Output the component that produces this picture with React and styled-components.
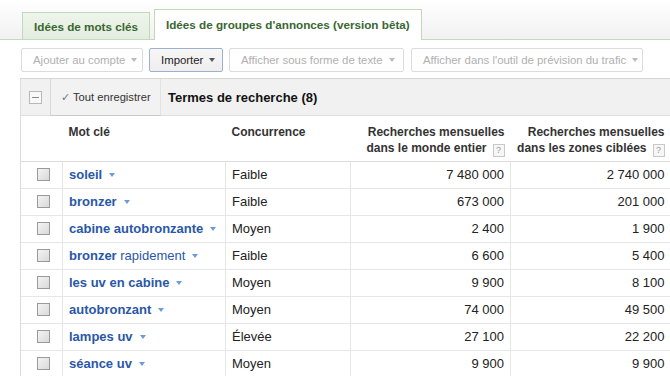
import styled, { createGlobalStyle } from 'styled-components';

const GlobalStyle = createGlobalStyle`
  body {
    margin: 0;
    background: #fff;
    font-family: 'Liberation Sans', Arial, sans-serif;
    color: #222;
    overflow: hidden;
  }
`;

const rows = [
  { kw: 'soleil', comp: 'Faible', global: '7 480 000', local: '2 740 000' },
  { kw: 'bronzer', comp: 'Faible', global: '673 000', local: '201 000' },
  { kw: 'cabine autobronzante', comp: 'Moyen', global: '2 400', local: '1 900' },
  { kw: 'bronzer', extra: 'rapidement', comp: 'Faible', global: '6 600', local: '5 400' },
  { kw: 'les uv en cabine', comp: 'Moyen', global: '9 900', local: '8 100' },
  { kw: 'autobronzant', comp: 'Moyen', global: '74 000', local: '49 500' },
  { kw: 'lampes uv', comp: 'Élevée', global: '27 100', local: '22 200' },
  { kw: 'séance uv', comp: 'Moyen', global: '9 900', local: '9 900' },
];

const Page = styled.div`
  width: 670px;
  height: 376px;
  overflow: hidden;
`;

const TabBar = styled.div`
  height: 39px;
  display: flex;
  align-items: flex-end;
  gap: 4px;
  padding-left: 22px;
  background: linear-gradient(to bottom, #ffffff 0%, #f0f1f0 100%);
  border-bottom: 1px solid #c4dabd;
`;

const Tab = styled.div`
  height: ${(p) => (p.$active ? '28px' : '26px')};
  margin-bottom: ${(p) => (p.$active ? '-1px' : '0')};
  display: flex;
  align-items: center;
  padding: 0 11px;
  border: 1px solid #c2d8bb;
  border-bottom: none;
  background: ${(p) =>
    p.$active ? '#fff' : 'linear-gradient(to bottom, #eef5eb, #e3eddf)'};
  color: #3a6632;
  font-size: 11.7px;
  font-weight: bold;
  white-space: nowrap;
  padding-bottom: ${(p) => (p.$active ? '2px' : '0')};
`;

const Toolbar = styled.div`
  display: flex;
  padding: 8px 0 0 21px;
  height: 24px;
`;

const Button = styled.div`
  flex-shrink: 0;
  box-sizing: border-box;
  width: ${(p) => p.$w}px;
  margin-right: ${(p) => p.$gap || 0}px;
  white-space: nowrap;
  height: 24px;
  display: flex;
  align-items: center;
  gap: 6px;
  padding: 0 0 0 11px;
  border: 1px solid ${(p) => (p.$enabled ? '#9fb0cc' : '#dcdcdc')};
  border-radius: 2px;
  background: ${(p) =>
    p.$enabled ? 'linear-gradient(to bottom, #f7f7f7, #eeeeee)' : '#fff'};
  color: ${(p) => (p.$enabled ? '#222' : '#b0b0b0')};
  font-size: 11.4px;
`;

const Caret = styled.span`
  width: 0;
  height: 0;
  border-left: 3.5px solid transparent;
  border-right: 3.5px solid transparent;
  border-top: 4px solid ${(p) => p.$color || '#999'};
  display: inline-block;
`;

const Panel = styled.div`
  margin: 6px 0 0 20px;
  border-left: 1px solid #dcdcdc;
  border-top: 1px solid #d6d6d6;
  width: 660px;
`;

const Strip = styled.div`
  height: 36px;
  display: flex;
  align-items: stretch;
  background: #f1f1f1;
  border-bottom: 1px solid #dedede;
`;

const CollapseCell = styled.div`
  width: 29px;
  display: flex;
  align-items: center;
  padding-left: 8px;
  box-sizing: border-box;
`;

const CollapseBox = styled.span`
  width: 11px;
  height: 11px;
  border: 1px solid #b8b8b8;
  background: #f8f8f8;
  position: relative;
  &::after {
    content: '';
    position: absolute;
    left: 2px;
    right: 2px;
    top: 5px;
    height: 1px;
    background: #8a8a8a;
  }
`;

const SaveButton = styled.div`
  width: 111px;
  box-sizing: border-box;
  display: flex;
  align-items: center;
  gap: 3px;
  padding-left: 10px;
  border-left: 1px solid #d8d8d8;
  border-right: 1px solid #e2e2e2;
  border-bottom: 1px solid #c8c8c8;
  margin-bottom: -1px;
  background: #f2f2f2;
  font-size: 11.2px;
  color: #333;
  white-space: nowrap;
`;

const Tick = styled.span`
  color: #777;
`;

const StripTitle = styled.div`
  display: flex;
  align-items: center;
  padding-left: 7px;
  font-size: 13px;
  font-weight: bold;
  color: #111;
`;

const Table = styled.table`
  border-collapse: collapse;
  table-layout: fixed;
  width: 649px;
`;

const Th = styled.th`
  height: 45px;
  box-sizing: border-box;
  vertical-align: top;
  padding: 8px 6px 0;
  text-align: ${(p) => (p.$right ? 'right' : 'left')};
  font-size: 12px;
  line-height: 16px;
  font-weight: bold;
  color: #333;
  border-bottom: 1px solid #dcdcdc;
  white-space: nowrap;
`;

const Td = styled.td`
  height: 26px;
  padding: 0 6px;
  font-size: 13px;
  color: #222;
  text-align: ${(p) => (p.$right ? 'right' : 'left')};
  border-bottom: 1px solid #e6e6e6;
  border-left: 1px solid ${(p) => (p.$first ? 'transparent' : '#e6e6e6')};
  white-space: nowrap;
`;

const CheckCell = styled(Td)`
  padding: 0 0 0 15px;
`;

const Check = styled.span`
  display: block;
  width: 11px;
  height: 11px;
  border: 1px solid #9a9a9a;
  background: linear-gradient(135deg, #f4f4f4, #d9d9d9);
`;

const Keyword = styled.span`
  color: #2a57a8;
  font-weight: bold;
  display: inline-flex;
  align-items: center;
  gap: 7px;
`;

const Extra = styled.span`
  font-weight: normal;
`;

const Help = styled.span`
  display: inline-block;
  width: 10px;
  height: 11px;
  margin-left: 6px;
  border: 1px solid #c8c8c8;
  background: #f6f6f6;
  color: #999;
  font-size: 9px;
  line-height: 11px;
  text-align: center;
  font-weight: normal;
  vertical-align: -1px;
`;

export default function App() {
  return (
    <Page>
      <GlobalStyle />
      <TabBar>
        <Tab>Idées de mots clés</Tab>
        <Tab $active>Idées de groupes d'annonces (version bêta)</Tab>
      </TabBar>
      <Toolbar>
        <Button $w={122} $gap={6}>
          Ajouter au compte <Caret $color="#bbb" />
        </Button>
        <Button $w={74} $gap={6} $enabled>
          Importer <Caret $color="#555" />
        </Button>
        <Button $w={175} $gap={7}>
          Afficher sous forme de texte <Caret $color="#bbb" />
        </Button>
        <Button $w={232}>
          Afficher dans l'outil de prévision du trafic <Caret $color="#bbb" />
        </Button>
      </Toolbar>
      <Panel>
        <Strip>
          <CollapseCell>
            <CollapseBox />
          </CollapseCell>
          <SaveButton>
            <Tick>✓</Tick> Tout enregistrer
          </SaveButton>
          <StripTitle>Termes de recherche (8)</StripTitle>
        </Strip>
        <Table>
          <colgroup>
            <col style={{ width: 41 }} />
            <col style={{ width: 163 }} />
            <col style={{ width: 125 }} />
            <col style={{ width: 160 }} />
            <col style={{ width: 160 }} />
          </colgroup>
          <thead>
            <tr>
              <Th />
              <Th>Mot clé</Th>
              <Th>Concurrence</Th>
              <Th $right>
                Recherches mensuelles
                <br />
                dans le monde entier<Help>?</Help>
              </Th>
              <Th $right>
                Recherches mensuelles
                <br />
                dans les zones ciblées<Help>?</Help>
              </Th>
            </tr>
          </thead>
          <tbody>
            {rows.map((r) => (
              <tr key={r.kw + (r.extra || '')}>
                <CheckCell $first>
                  <Check />
                </CheckCell>
                <Td>
                  <Keyword>
                    <span>
                      {r.kw}
                      {r.extra && <Extra>{' ' + r.extra}</Extra>}
                    </span>
                    <Caret $color="#6d9ad8" />
                  </Keyword>
                </Td>
                <Td>{r.comp}</Td>
                <Td $right>{r.global}</Td>
                <Td $right>{r.local}</Td>
              </tr>
            ))}
          </tbody>
        </Table>
      </Panel>
    </Page>
  );
}
